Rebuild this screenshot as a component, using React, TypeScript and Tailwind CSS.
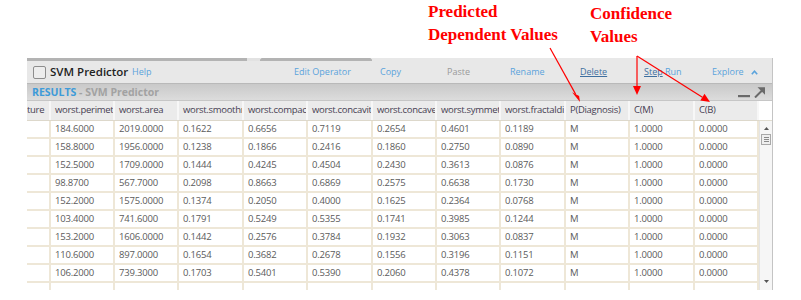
import React from "react";

const colWidths = [
  "w-[24px]",
  "w-[64px]",
  "w-[64px]",
  "w-[65px]",
  "w-[64px]",
  "w-[65px]",
  "w-[64px]",
  "w-[64px]",
  "w-[65px]",
  "w-[64px]",
  "w-[65px]",
  "w-[64px]",
];

const headers = [
  "ture",
  "worst.perimeter",
  "worst.area",
  "worst.smoothness",
  "worst.compactness",
  "worst.concavity",
  "worst.concave points",
  "worst.symmetry",
  "worst.fractaldimension",
  "P(Diagnosis)",
  "C(M)",
  "C(B)",
];

const rows = [
  ["184.6000", "2019.0000", "0.1622", "0.6656", "0.7119", "0.2654", "0.4601", "0.1189"],
  ["158.8000", "1956.0000", "0.1238", "0.1866", "0.2416", "0.1860", "0.2750", "0.0890"],
  ["152.5000", "1709.0000", "0.1444", "0.4245", "0.4504", "0.2430", "0.3613", "0.0876"],
  ["98.8700", "567.7000", "0.2098", "0.8663", "0.6869", "0.2575", "0.6638", "0.1730"],
  ["152.2000", "1575.0000", "0.1374", "0.2050", "0.4000", "0.1625", "0.2364", "0.0768"],
  ["103.4000", "741.6000", "0.1791", "0.5249", "0.5355", "0.1741", "0.3985", "0.1244"],
  ["153.2000", "1606.0000", "0.1442", "0.2576", "0.3784", "0.1932", "0.3063", "0.0837"],
  ["110.6000", "897.0000", "0.1654", "0.3682", "0.2678", "0.1556", "0.3196", "0.1151"],
  ["106.2000", "739.3000", "0.1703", "0.5401", "0.5390", "0.2060", "0.4378", "0.1072"],
];

function Arrows() {
  return (
    <svg
      className="absolute inset-0 pointer-events-none"
      width="801"
      height="300"
      viewBox="0 0 801 300"
    >
      <g stroke="#ff0000" strokeWidth="1.2" fill="none">
        <line x1="550" y1="48" x2="575.6" y2="94.1" />
        <line x1="637" y1="56" x2="637" y2="86" />
        <line x1="637" y1="56" x2="702.4" y2="97.2" />
      </g>
      <g fill="#ff0000">
        <polygon points="580,102 579.1,96 572.1,92.2" />
        <polygon points="637,95 633,86 641,86" />
        <polygon points="710,102 700.3,100.6 704.5,93.8" />
      </g>
    </svg>
  );
}

function Toolbar() {
  const link = "text-[9px] text-[#5aa3dc]";
  return (
    <div className="flex items-center h-[23px] pl-[6px] bg-[#e8e8e8] border-b border-[#b9b9b9]">
      <div className="w-[17px] shrink-0">
        <div className="w-[13px] h-[13px] rounded-[2px] border border-[#8d8d8d] bg-[#ededed]" />
      </div>
      <div className="w-[82px] shrink-0 text-[11.5px] font-semibold text-[#222]">SVM Predictor</div>
      <div className={`w-[162px] shrink-0 ${link}`}>Help</div>
      <div className={`w-[86px] shrink-0 ${link}`}>Edit Operator</div>
      <div className={`w-[67px] shrink-0 ${link}`}>Copy</div>
      <div className="w-[63px] shrink-0 text-[9px] text-[#9a9a9a]">Paste</div>
      <div className={`w-[70px] shrink-0 ${link}`}>Rename</div>
      <div className="w-[64px] shrink-0 text-[9px] text-[#3f6f9f] underline">Delete</div>
      <div className="w-[68px] shrink-0 text-[9px] text-[#5aa3dc]">
        <span className="underline text-[#3f6f9f]">Step</span> Run
      </div>
      <div className={`flex items-center gap-[7px] ${link}`}>
        Explore
        <svg width="7" height="5" viewBox="0 0 7 5">
          <path d="M0.8 4.2 L3.5 1.2 L6.2 4.2" stroke="#5aa3dc" strokeWidth="1.6" fill="none" />
        </svg>
      </div>
    </div>
  );
}

function ResultsBar() {
  return (
    <div className="flex items-center justify-between h-[16px] pl-[5px] pr-[6px] bg-gradient-to-b from-[#c9c9c9] to-[#dcdcdc]">
      <div className="text-[10.5px] font-bold leading-none">
        <span className="text-[#3d9bd9]">RESULTS</span>
        <span className="text-[#a2a2a2]"> - SVM Predictor</span>
      </div>
      <svg width="28" height="12" viewBox="0 0 28 12">
        <rect x="0" y="9" width="12" height="2.2" fill="#6a6a6a" />
        <path d="M17 11.5 L26 2.5" stroke="#6a6a6a" strokeWidth="2" />
        <path d="M19.5 1.2 L27 1.2 L27 8.7 Z" fill="#6a6a6a" />
      </svg>
    </div>
  );
}

function Scrollbar() {
  return (
    <div className="w-[13px] shrink-0 flex flex-col">
      <div className="h-[20px] bg-white border-b border-[#e0dccf]" />
      <div className="flex-1 flex flex-col items-center bg-[#f6f6f6] border-l border-[#e4e4e4]">
        <svg width="7" height="5" viewBox="0 0 7 5" className="mt-[5px]">
          <path d="M3.5 1 L6 4 L1 4 Z" fill="#555" />
        </svg>
        <div className="mt-[3px] w-[10px] h-[11px] border border-[#a9a9a9] bg-[#efefef] flex flex-col items-center justify-center gap-[1px]">
          <div className="w-[5px] h-[1px] bg-[#8a8a8a]" />
          <div className="w-[5px] h-[1px] bg-[#8a8a8a]" />
          <div className="w-[5px] h-[1px] bg-[#8a8a8a]" />
        </div>
        <div className="flex-1" />
        <svg width="7" height="5" viewBox="0 0 7 5" className="mb-[6px]">
          <path d="M1 1 L6 1 L3.5 4 Z" fill="#555" />
        </svg>
      </div>
    </div>
  );
}

function DataTable() {
  return (
    <div className="flex-1 flex flex-col">
      <div className="flex h-[20px] bg-[#ebebeb] border-b border-[#ddd8cb]">
        {headers.map((h, i) => (
          <div
            key={i}
            className={`${colWidths[i]} shrink-0 overflow-hidden whitespace-nowrap flex items-center border-r-2 border-[#f7f7f7] text-[9.5px] tracking-[-0.3px] text-[#463e52] ${
              i === 0 ? "pl-0" : "pl-[4px]"
            }`}
          >
            {h}
          </div>
        ))}
      </div>
      {rows.map((r, ri) => (
        <div key={ri} className="flex h-[18px] border-b-2 border-[#eee7d7]">
          {["", ...r, "M", "1.0000", "0.0000"].map((v, ci) => (
            <div
              key={ci}
              className={`${colWidths[ci]} shrink-0 overflow-hidden whitespace-nowrap flex items-center pl-[4px] border-r-2 border-[#eee7d7] text-[9.5px] tracking-[-0.2px] text-[#5b5b5b]`}
            >
              {v}
            </div>
          ))}
        </div>
      ))}
      <div className="flex h-[7px]">
        {colWidths.map((w, ci) => (
          <div key={ci} className={`${w} shrink-0 border-r-2 border-[#eee7d7]`} />
        ))}
      </div>
    </div>
  );
}

export default function App() {
  return (
    <div className="relative w-[801px] h-[300px] bg-white overflow-hidden font-['Open_Sans',sans-serif]">
      <div className="h-[58px]" />

      <div className="ml-[27px] w-[746px] border-r border-[#c4c4c4]">
        {/* tab strip */}
        <div className="flex h-[3px]">
          <div className="w-[220px] bg-[#b3b3b3]" />
          <div className="w-[13px] bg-[#e2e2e2]" />
          <div className="w-[112px] bg-[#b3b3b3] rounded-t-[2px]" />
          <div className="flex-1 bg-[#e8e8e8]" />
        </div>

        <Toolbar />
        <ResultsBar />

        {/* results grid */}
        <div className="flex border-t border-[#c6c6c6] bg-white">
          <DataTable />
          <Scrollbar />
        </div>
      </div>

      {/* annotations */}
      <div className="absolute left-[428px] top-0 font-['Liberation_Serif',serif] font-bold text-[17px] leading-[23px] text-[#ff0000]">
        <div>Predicted</div>
        <div>Dependent Values</div>
      </div>
      <div className="absolute left-[590px] top-[2px] font-['Liberation_Serif',serif] font-bold text-[17px] leading-[23px] text-[#ff0000]">
        <div>Confidence</div>
        <div>Values</div>
      </div>
      <Arrows />
    </div>
  );
}
